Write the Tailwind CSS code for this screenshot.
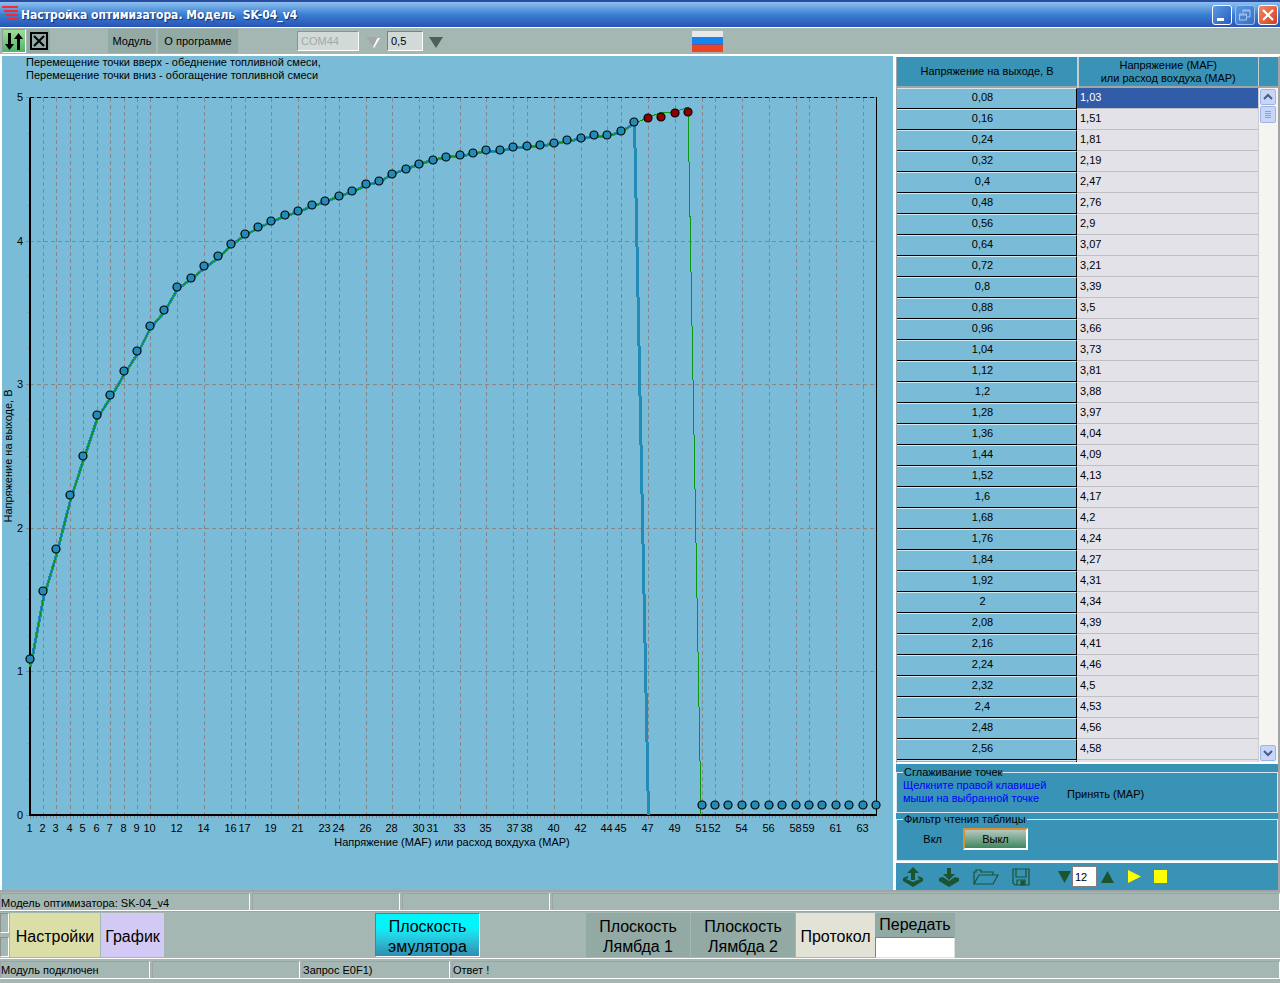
<!DOCTYPE html>
<html lang="ru">
<head>
<meta charset="utf-8">
<title>Настройка оптимизатора</title>
<script src="https://cdn.jsdelivr.net/npm/@tailwindcss/browser@4"></script>
</head>
<body class="flex min-h-screen flex-col bg-[#a4b7b3] font-['Liberation_Sans',sans-serif] text-[11px] leading-[13px] text-black">

<header class="flex h-[27px] shrink-0 items-center border-t-2 border-[#2a4a9e] bg-linear-to-b from-[#8cc0f0] via-[#3a80d2] via-50% to-[#2a52b4] pr-[2px] pl-[2px]">
  <svg class="-mt-1 h-[18px] w-[18px]" viewBox="0 0 18 18" fill="#f82830" aria-hidden="true"><path d="M0 2h16v2H0zM1 6h15v2H3zM3 10h13v2H5zM5 14h11v2H7z"/></svg>
  <h1 class="flex-1 pl-px font-['DejaVu_Sans_Condensed','DejaVu_Sans',sans-serif] text-xs font-bold whitespace-pre text-white [text-shadow:1px_1px_1px_#0c2a78]">Настройка оптимизатора. Модель  SK-04_v4</h1>
  <div class="flex gap-[3px]">
    <button aria-label="Свернуть" class="h-5 w-5 rounded-[3px] border border-white bg-linear-to-br from-[#5c9ae0] to-[#2a5cc0]"><svg viewBox="0 0 18 18" fill="#fff"><path d="M4 12h7v3H4z"/></svg></button>
    <button aria-label="Восстановить" class="h-5 w-5 rounded-[3px] border border-[#9cc0ee] bg-linear-to-br from-[#5c9ae0] to-[#3a6cc4]"><svg viewBox="0 0 18 18" fill="none" stroke="#a8c8f0"><path d="M7 6.500V4h7v7h-3M3.500 8h7v6h-7zM3.500 9h7M7 5h7"/></svg></button>
    <button aria-label="Закрыть" class="h-5 w-5 rounded-[3px] border border-white bg-linear-to-br from-[#f08868] to-[#d03c18]"><svg viewBox="0 0 18 18" fill="none" stroke="#fff" stroke-width="2.200"><path d="M4 4l10 10M14 4L4 14"/></svg></button>
  </div>
</header>

<div class="flex h-[29px] shrink-0 items-center border-t border-b-2 border-white pl-[2px]">
  <button aria-label="Обмен" class="h-6 w-6 border border-r-white border-b-white border-l-[#8a9a94] border-t-[#8a9a94] bg-linear-to-b from-[#9edc98] to-[#4cb468]"><svg viewBox="0 0 22 22" fill="#000"><path d="M5 3h3v11h3l-4.500 6L2 14h3zM14 20h3V9h3l-4.500-6L11 9h3z"/></svg></button>
  <button aria-label="Отключить" class="ml-px flex h-6 w-[23px] items-center justify-center bg-[#92a9a4]"><svg class="h-[18px] w-[18px]" viewBox="0 0 18 18" fill="none" stroke="#000" stroke-width="2"><path d="M1 1h16v16H1zM4 4l10 10M14 4L4 14"/></svg></button>
  <button class="ml-[58px] h-6 w-12 bg-[#92a9a4]">Модуль</button>
  <button class="ml-[2px] h-6 w-20 bg-[#92a9a4]">О программе</button>
  <input aria-label="Порт" disabled value="COM44" class="ml-[59px] h-5 w-[62px] border border-r-white border-b-white border-l-[#8c9290] border-t-[#8c9290] bg-[#d2dad8] pl-[3px] text-[#a6a8a8]">
  <button aria-label="Выбрать порт" disabled class="mt-[3px] ml-[7px] w-[14px]"><svg viewBox="0 0 14 11"><path d="M1 1h13L8 11z" fill="#fff"/><path d="M0 0h12L7 10z" fill="#a6a6a8"/></svg></button>
  <input aria-label="Интервал" value="0,5" class="ml-[7px] h-5 w-9 border border-r-white border-b-white border-l-[#808080] border-t-[#808080] bg-[#d2dad8] pl-[3px]">
  <button aria-label="Выбрать интервал" class="mt-[3px] ml-[6px] w-[14px]"><svg viewBox="0 0 14 11"><path d="M0 0h14L7 11z" fill="#4c6256"/></svg></button>
  <button aria-label="Русский язык" class="ml-[249px] h-[21px] w-[31px]"><svg viewBox="0 0 31 21"><path fill="#e8e8e8" d="M0 0h31v7H0z"/><path fill="#1484f0" d="M0 6h31v8H0z"/><path fill="#ec4424" d="M0 14h31v7H0z"/><path fill="#7a5080" d="M0 13h31v1H0z"/></svg></button>
</div>

<main class="flex border-b-2 border-[#a2a4a8]">
  <section class="min-w-0 flex-1 border-l-2 border-white bg-[#7abcd7]" aria-label="График">
    <svg id="chart" class="block w-full" viewBox="2 56 891 834" font-size="11"></svg>
  </section>

  <aside class="flex w-[387px] shrink-0 flex-col border-t border-r-2 border-l-[3px] border-white border-r-[#a2a4a8] bg-[#3893b7]">
    <div class="flex h-[707px] flex-col overflow-hidden border-b-2 border-l border-b-white border-l-[#a2a4a8]">
      <table class="w-full table-fixed border-collapse">
        <thead>
          <tr class="h-[30px] border-b-2 border-[#a2a4a8] text-center">
            <th class="w-[181px] border-r-2 border-[#c8ccd0] font-normal">Напряжение на выходе, В</th>
            <th class="w-[180px] border-r border-[#c8ccd0] font-normal">Напряжение (MAF)<br>или расход вохдуха (MAP)</th>
            <th aria-label="Прокрутка"></th>
          </tr>
        </thead>
      </table>
      <div class="flex min-h-0 flex-1">
        <table class="w-[361px] table-fixed border-separate border-spacing-0 self-start"><tbody id="rows"></tbody></table>
        <div class="flex flex-1 flex-col border-l border-[#c8ccd0] bg-[#f4f4f0] p-px">
          <button aria-label="Вверх" class="h-4 w-4 rounded-xs border border-[#a0b4e0] bg-[#c8d6fa]"><svg viewBox="0 0 14 14" fill="none" stroke="#4a5c84" stroke-width="2"><path d="M3 9l4-4 4 4"/></svg></button>
          <div class="mt-px h-[17px] w-4 rounded-xs border border-[#a0b4e0] bg-[#c8d6fa]"><svg viewBox="0 0 14 15" stroke="#8ca0d4"><path d="M4 4.500h6M4 6.500h6M4 8.500h6M4 10.500h6"/></svg></div>
          <button aria-label="Вниз" class="mt-auto h-4 w-4 rounded-xs border border-[#a0b4e0] bg-[#c8d6fa]"><svg viewBox="0 0 14 14" fill="none" stroke="#4a5c84" stroke-width="2"><path d="M3 5l4 4 4-4"/></svg></button>
        </div>
      </div>
    </div>

    <fieldset class="mt-[2px] flex h-[47px] items-start border border-[#d8e8f0] pl-[6px]">
      <legend class="h-[13px] px-px">Сглаживание точек</legend>
      <p class="w-[164px] text-[#0000ff]">Щелкните правой клавишей<br>мыши на выбранной точке</p>
      <button class="mt-[9px]">Принять (MAP)</button>
    </fieldset>
    <fieldset class="flex h-[48px] items-start border border-[#d8e8f0] pl-[6px]">
      <legend class="h-[13px] px-px">Фильтр чтения таблицы</legend>
      <button class="mt-px ml-1 h-6 w-14 pr-[21px] text-right">Вкл</button>
      <button class="mt-[2px] h-[22px] w-[65px] border-2 border-[#d89030] border-r-white border-b-white bg-linear-to-b from-[#b4c8c0] to-[#3c8860]">Выкл</button>
    </fieldset>
    <div class="flex h-[29px] flex-1 items-center border-t-2 border-white pl-[6px] text-[#1c5430]">
      <button aria-label="Выгрузить" class="h-5 w-[22px]"><svg viewBox="0 0 22 20" fill="currentColor"><path d="M11 0l6 6h-4v7H9V6H5zM1 11l5-2v2l-2 1 7 3 7-3-2-1V9l5 2v3l-10 6L1 14z"/></svg></button>
      <button aria-label="Загрузить" class="ml-[14px] h-5 w-[22px]"><svg viewBox="0 0 22 20" fill="currentColor"><path d="M9 1h4v6h4l-6 6-6-6h4zM1 11l4-1 6 4 6-4 4 1v3l-10 6L1 14z"/></svg></button>
      <button aria-label="Открыть" class="ml-[13px] h-4 w-[26px]"><svg viewBox="0 0 26 16" fill="none" stroke="currentColor" stroke-width="1.200"><path d="M1 15V3h2V1h5v2h12v3M1 15L6 6h19l-5 9z"/></svg></button>
      <button aria-label="Сохранить" class="ml-[13px] h-[18px] w-[18px]"><svg viewBox="0 0 18 18" fill="none" stroke="currentColor" stroke-width="1.200"><path d="M1 1h16v16H3l-2-2zM4 1v8h10V1M5 17v-5h8v5"/><path d="M9 13h3v4H9z" fill="currentColor"/></svg></button>
      <button aria-label="Меньше" class="ml-[28px] w-[13px]"><svg viewBox="0 0 13 12"><path d="M0 0h13L6.500 12z" fill="currentColor"/></svg></button>
      <input aria-label="Номер" value="12" class="ml-px h-[21px] w-[25px] border border-[#808080] bg-white pl-[2px] text-black">
      <button aria-label="Больше" class="ml-1 w-[13px]"><svg viewBox="0 0 13 12"><path d="M0 12h13L6.500 0z" fill="currentColor"/></svg></button>
      <button aria-label="Пуск" class="ml-[14px] w-[13px]"><svg viewBox="0 0 13 13"><path d="M0 0l13 6.500L0 13z" fill="#ff0"/></svg></button>
      <button aria-label="Стоп" class="ml-[13px] h-[13px] w-[13px] bg-[#ffff00]"></button>
    </div>
  </aside>
</main>

<div class="mt-px flex h-[18px] shrink-0 gap-[2px] border-b border-white *:border-t *:border-r *:border-l *:border-t-[#a2a2a6] *:border-l-[#a2a2a6] *:border-r-white">
  <p class="w-[250px] pt-[3px]">Модель оптимизатора: SK-04_v4</p><p class="w-[148px]"></p><p class="w-[148px]"></p><p class="flex-1"></p>
</div>

<nav class="flex h-12 shrink-0 items-center border-t border-b border-t-[#a2a2a6] border-b-white text-base leading-5">
  <div class="flex h-11 w-[9px] flex-col gap-1"><span class="flex-1 border border-[#8a9290] border-r-white border-b-white"></span><span class="flex-1 border border-[#8a9290] border-r-white border-b-white"></span></div>
  <button class="ml-px h-11 w-[90px] bg-[#dcdea8] pt-[3px]">Настройки</button>
  <button class="ml-px h-11 w-[63px] bg-[#d2caf4] pt-[3px]">График</button>
  <button class="ml-[211px] h-11 w-[105px] border border-[#3a86a4] border-r-white border-b-white bg-linear-to-b from-[#04f4fc] from-30% to-[#308cb0] pt-[3px]">Плоскость<br>эмулятора</button>
  <button class="ml-[106px] h-11 w-[104px] bg-[#92a9a4] pt-[3px]">Плоскость<br>Лямбда 1</button>
  <button class="ml-px h-11 w-[104px] bg-[#92a9a4] pt-[3px]">Плоскость<br>Лямбда 2</button>
  <button class="ml-px h-11 w-[79px] bg-[#e2e2d6] pt-[3px]">Протокол</button>
  <div class="flex h-[45px] w-20 flex-col">
    <button class="h-6 bg-[#92a9a4]">Передать</button>
    <input aria-label="Команда" class="h-[21px] w-full border border-[#808080] border-r-[#e0e0e0] border-b-[#e0e0e0] bg-white text-xs">
  </div>
</nav>

<footer class="mt-[2px] flex h-[18px] shrink-0 gap-[2px] border-b border-white *:border-t *:border-r *:border-l *:border-t-[#a2a2a6] *:border-l-[#a2a2a6] *:border-r-white">
  <p class="w-[150px] pt-[2px]">Модуль подключен</p><p class="w-[148px]"></p><p class="w-[148px] pt-[2px]">Запрос E0F1)</p><p class="flex-1 pt-[2px]">Ответ !</p>
</footer>

<script>
const table = [1.03,1.51,1.81,2.19,2.47,2.76,2.9,3.07,3.21,3.39,3.5,3.66,3.73,3.81,3.88,3.97,4.04,4.09,4.13,4.17,4.2,4.24,4.27,4.31,4.34,4.39,4.41,4.46,4.5,4.53,4.56,4.58];
const comma = n => String(+n.toFixed(2)).replace('.', ',');

document.getElementById('rows').innerHTML = table.concat(null).map((v, i) => `<tr class="h-[21px]">
  <td class="h-[21px] w-[180px] border-t border-r border-b border-t-[#d4e8f0] border-r-black border-b-black bg-[#7abcd7] pr-[8px] pb-[3px] text-center">${v ? comma((i + 1) * 0.08) : ''}</td>
  <td class="border-b border-[#c0c0c4] pb-[2px] pl-[3px] ${i ? 'bg-[#e2e2e8]' : 'bg-[#315ca8] text-white'}">${v ? comma(v) : ''}</td></tr>`).join('');

// Marker heights, in chart units, for the 64 table points
const marks = [659,591,549,495,456,415,395,371,351,326,310,287,278,266,256,244,234,227,221,215,211,205,201,196,191,184,181,174,169,164,160,157,155,153,150,150,147,146,145,143,140,138,135,135,131,122,118,117,113,112].concat(Array(14).fill(805));
const X = i => Math.floor(30 + (i - 1) * 13.44), Y = v => Math.floor(815 - v * 143.5);
const line = (x1, y1, x2, y2, a) => `<path d="M${x1} ${y1}L${x2} ${y2}" ${a}/>`;
const crisp = 'shape-rendering="crispEdges" ';
let s = '';
const labels = [1,2,3,4,5,6,7,8,9,10,12,14,16,17,19,21,23,24,26,28,30,31,33,35,37,38,40,42,44,45,47,49,51,52,54,56,58,59,61,63];
for (const n of labels) {
  const x = X(n) + .5;
  if (n > 1) s += line(x, 98, x, 814, crisp + 'stroke="#888488" stroke-dasharray="4 3"');
  s += line(x, 815, x, 819, crisp + 'stroke="#888488"');
  s += `<text x="${x - 1}" y="832" text-anchor="middle">${n}</text>`;
}
for (let n = 1; n < 64; n += .25) s += line(X(n) + .5, 816, X(n) + .5, 818, crisp + 'stroke="#888488"');
for (let v = 0; v <= 5; v++) {
  const y = Y(v) + .5;
  if (v && v < 5) s += line(30, y, 876, y, crisp + 'stroke="#888488" stroke-dasharray="4 3"');
  s += line(26, y, 30, y, crisp + 'stroke="#888488"');
  s += `<text x="23" y="${y + 3}" text-anchor="end">${v}</text>`;
  if (v < 5) for (let k = 1; k < 4; k++) s += line(28, Y(v + k / 4) + .5, 30, Y(v + k / 4) + .5, crisp + 'stroke="#888488"');
}
s += line(30, 97.5, 877, 97.5, crisp + 'stroke="#888488"') + line(30, 97.5, 877, 97.5, crisp + 'stroke="#000" stroke-dasharray="4 3"');
s += line(876.5, 97, 876.5, 815, crisp + 'stroke="#000"');
s += line(30, 98, 30, 816, crisp + 'stroke="#000" stroke-width="2"') + line(29, 815, 877, 815, crisp + 'stroke="#000" stroke-width="2"');
const curve = marks.slice(0, 46).map((m, i) => [X(i + 1) + .5, i < 32 ? Y(table[i]) : m + 1]);
const blue = curve.concat([[648.5, 815]]);
const green = curve.concat([[648, 118], [661, 112], [675, 112], [688, 107], [701, 815]]);
s += `<polyline points="${blue.join(' ')}" ${crisp} fill="none" stroke="#238cb6" stroke-width="3"/>`;
s += `<polyline points="${green.join(' ')}" ${crisp} fill="none" stroke="#089810" stroke-width="1"/>`;
marks.forEach((m, i) => s += `<circle cx="${X(i + 1)}" cy="${m}" r="4" fill="${i > 45 && i < 50 ? '#8a0000' : '#238cb6'}" stroke="#000" stroke-width="1.200"/>`);
s += '<text x="26" y="66">Перемещение точки вверх - обеднение топливной смеси,</text><text x="26" y="79">Перемещение точки вниз - обогащение топливной смеси</text>';
s += '<text x="452" y="846" text-anchor="middle">Напряжение (MAF) или расход вохдуха (MAP)</text>';
s += '<text transform="translate(12 456) rotate(-90)" text-anchor="middle">Напряжение на выходе, В</text>';
document.getElementById('chart').innerHTML = s;
</script>
</body>
</html>
